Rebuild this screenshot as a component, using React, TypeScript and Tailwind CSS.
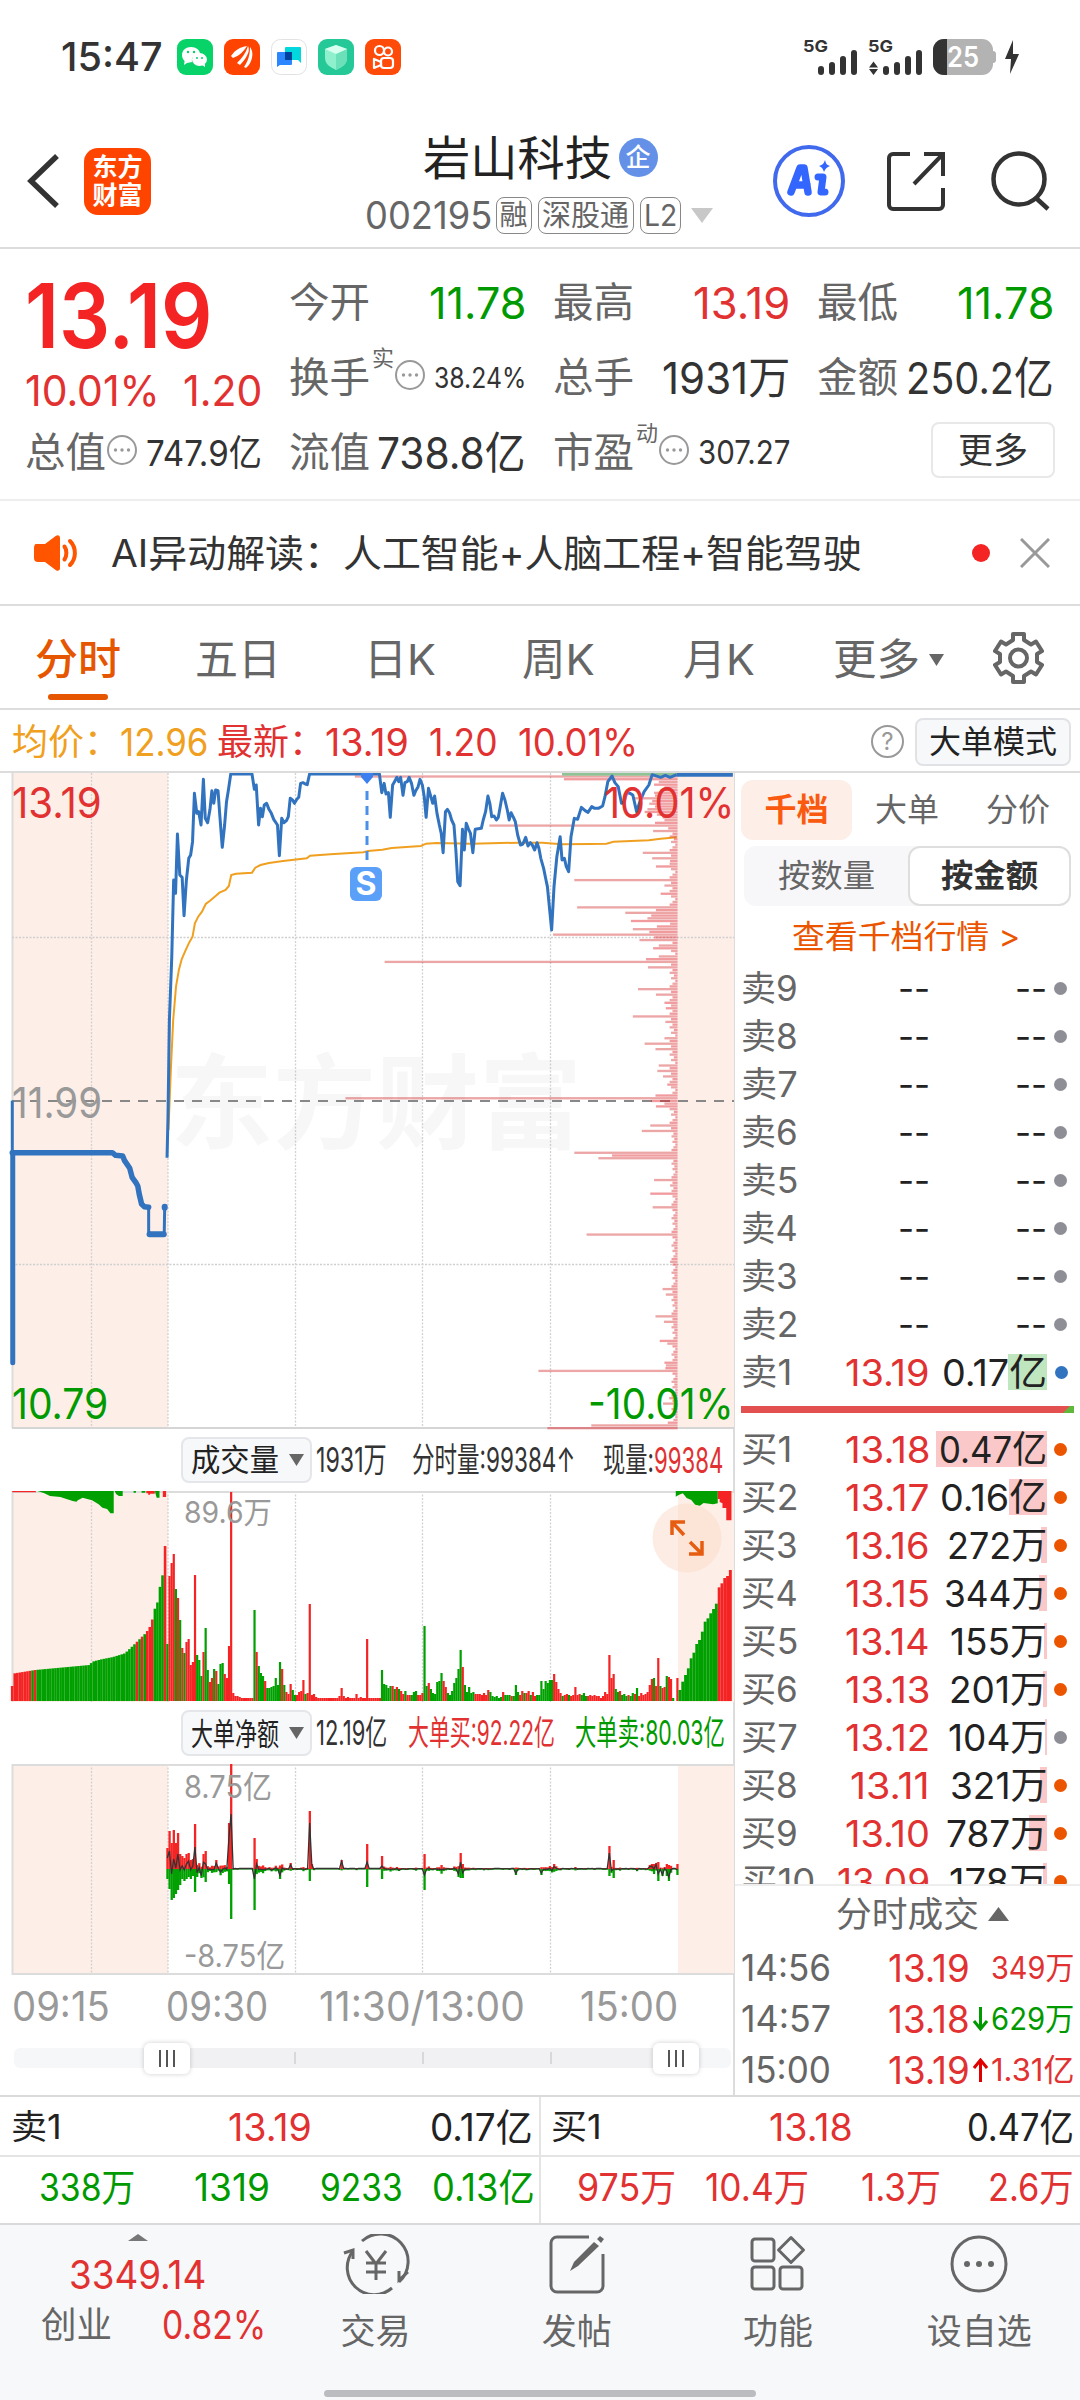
import { useLayoutEffect, useRef, useState } from "react";
import type { ReactNode } from "react";

const AUCTION_LINE =
  "26,1148 190,1148 238,1148 245,1156 260,1158 264,1172 275,1195 280,1222 288,1238 292,1248 295,1272 300,1302 306,1310 315,1312";
const AUCTION_TAIL = "315,1312 315,1385 320,1393 348,1393 349,1312";

const PRICE_LINE =
  "354,1163 356,1040 359,750 364,560 368,330 372,370 376,192 381,315 386,322 390,437 395,330 400,265 404,255 408,215 412,70 417,130 421,125 426,165 431,28 435,145 440,158 445,118 449,62 453,100 457,60 462,62 466,140 471,232 476,165 480,95 484,60 489,12 534,12 539,58 543,45 548,165 552,115 556,140 560,105 565,100 570,118 575,130 580,148 588,165 592,257 597,145 602,158 607,152 611,140 615,85 620,90 624,100 629,88 633,82 637,40 642,38 647,42 651,44 656,12 804,12 809,68 814,40 818,72 823,68 827,142 832,45 836,35 841,22 845,35 849,22 854,76 858,38 863,35 867,22 872,40 877,76 881,62 886,50 890,28 895,45 899,80 903,142 908,55 913,80 917,100 921,78 926,130 931,165 935,190 939,248 944,125 948,118 953,130 957,150 962,165 966,240 970,335 975,347 980,178 984,240 988,160 993,178 997,190 1002,248 1007,178 1020,175 1024,150 1029,125 1034,78 1038,100 1042,140 1047,138 1052,150 1056,142 1060,110 1065,70 1070,90 1075,120 1079,150 1083,128 1088,142 1092,155 1097,195 1103,225 1108,222 1114,202 1119,228 1124,218 1128,225 1133,240 1138,218 1142,235 1146,265 1152,295 1157,330 1160,350 1169,480 1174,350 1180,260 1187,200 1191,270 1196,265 1200,290 1205,305 1210,200 1217,145 1224,148 1232,112 1240,122 1246,127 1254,110 1260,115 1268,115 1277,108 1282,80 1288,35 1297,18 1303,38 1310,50 1317,100 1323,95 1328,68 1335,70 1341,75 1349,125 1356,95 1365,65 1375,45 1382,14 1400,22 1410,16 1420,22 1434,14";

const AVG_LINE =
  "357,1080 362,900 367,750 373,650 379,600 385,568 392,545 400,520 408,500 413,460 420,440 428,425 436,402 445,392 455,380 465,368 478,360 485,348 490,315 500,311 534,308 541,293 552,285 570,279 600,273 650,265 657,257 700,253 770,247 780,243 810,239 830,234 892,228 903,221 925,219 1000,221 1100,218 1150,218 1190,223 1250,222 1285,221 1300,215 1375,211 1400,206 1434,202";

// price level -> left edge of the traded amount bar
const PROFILE: Record<number, number> = {
  0: 752, 1: 1195, 2: 1396, 3: 1386, 4: 1408, 5: 1400, 6: 1386, 7: 1388, 8: 1340, 9: 1382, 10: 1376, 11: 1388, 12: 1372, 13: 1366,
  14: 1392, 15: 1404, 16: 1408, 17: 1388, 18: 1037, 19: 1416, 20: 1384, 28: 1362, 30: 1382, 31: 1420, 33: 1390, 38: 1217,
  40: 1408, 43: 1400, 48: 1223, 49: 1390, 50: 1325, 51: 1380, 52: 1372, 53: 1337, 54: 1420, 55: 1392, 56: 1341, 57: 1376,
  58: 1172, 59: 1386, 60: 1355, 62: 1396, 63: 1384, 66: 1396, 67: 1369, 68: 815, 70: 1373, 78: 1352, 80: 1390, 83: 1408,
  85: 1411, 88: 1341, 90: 1410, 96: 1408, 98: 1366, 100: 1389, 106: 1396, 108: 1393, 110: 1405, 113: 1414, 117: 1389,
  118: 732, 119: 1380, 120: 1408, 121: 1390, 128: 1378, 130: 1360, 138: 1217, 139: 1297, 140: 1268, 148: 1386, 150: 1420,
  153: 1378, 158: 1383, 168: 1243, 178: 1420, 188: 1404, 190: 1411, 198: 1389, 200: 1407, 207: 1398, 208: 1414, 215: 1408,
  216: 1411, 217: 1410, 218: 1141, 228: 1418, 230: 1405, 237: 1415, 238: 1253, 239: 1160,
};

// one entry per minute, colour + height
const VOLUME =
  "g57 r125 r138 r147 g112 r103 g81 r53 g48 r59 r62 r36 r39 r126 g46 g41 g25 r49 g73 g31 r19 r23 g32 r30 g17 g37 g38 r27 r23 r55 r209 r8 r5 r5 r4 r3 r3 r3 r3 r3 r3 g91 r49 g35 g28 g25 r20 g13 g13 g14 g15 g23 g16 g39 r32 g16 r9 r7 r17 g11 g6 r6 r9 r10 r21 g7 r8 r97 r6 r7 r4 r3 r3 r3 r3 r3 r3 r3 r3 r3 r3 r5 r13 r5 r3 r4 r3 r3 r3 r7 r3 r4 r3 r3 r62 r3 r3 r3 r3 r3 r3 g31 g17 g16 g13 g15 r15 g12 r14 g12 r10 r7 g10 r6 r6 g6 g9 g10 r6 r6 r8 g75 g15 r18 g12 g8 g7 g19 g20 g28 r20 r14 g8 g6 g10 g18 g23 g32 g51 r34 g16 g9 g14 g8 g9 r7 r7 r7 r6 r8 r6 r11 g9 g5 g4 g5 g3 g4 r9 g6 g6 g6 r5 g5 g16 g9 r6 r10 g8 r8 r10 g6 r9 r5 g6 g6 g20 g12 g20 g18 g21 g21 r27 r19 r12 r8 g5 r6 r7 g6 r5 r6 r14 r6 r7 g6 g8 g5 r5 r6 r5 r6 r5 r5 r3 r5 r9 r7 r46 r23 r27 g12 g9 r10 g6 g7 g5 r6 g5 g8 r7 g13 r5 r8 r6 r7 r9 r16 r22 g23 r15 r43 g15 r13 r14 g25 r24 r22 g3 g0 r23";

const PRE_TOPS: [number, number][] = [
  [26, 768], [31, 730], [75, 720], [190, 705], [196, 695], [215, 688], [240, 681], [265, 670], [280, 650], [290, 636],
  [310, 608], [318, 590], [325, 560], [330, 525], [335, 515], [340, 462], [346, 428], [350, 348],
];
const POST_TOPS = [780, 755, 735, 715, 685, 668, 642, 630, 605, 575, 565, 550, 537, 521, 472, 460, 444, 438, 420];

const BIG_BUY: Record<number, number> = {
  0: 21, 1: 38, 2: 26, 3: 39, 4: 26, 5: 36, 6: 15, 7: 13, 8: 11, 9: 15, 10: 16, 11: 9, 12: 10, 13: 45, 17: 15, 18: 18, 23: 9,
  29: 46, 30: 105, 41: 31, 42: 10, 58: 6, 67: 58, 68: 5, 82: 9, 94: 25, 101: 13, 121: 15, 138: 16, 139: 5, 182: 5, 208: 23,
  210: 9, 227: 4, 228: 5, 229: 5, 230: 6, 231: 7, 235: 5, 236: 4, 240: 5,
};
const BIG_SELL: Record<number, number> = {
  0: 10, 1: 20, 2: 31, 3: 29, 4: 25, 5: 21, 6: 16, 7: 10, 8: 12, 9: 10, 10: 8, 11: 10, 12: 7, 13: 23, 14: 8, 16: 9, 18: 13, 29: 15,
  30: 50, 41: 41, 53: 10, 67: 12, 94: 18, 101: 10, 121: 21, 137: 8, 138: 9, 139: 9, 164: 6, 176: 6, 208: 7, 210: 9, 229: 5, 231: 12, 233: 7,
  235: 7, 236: 12, 240: 6,
};

const RED = "#f42424";
const GREEN = "#00a000";

const minutes = VOLUME.split(" ").map((v, i) => ({
  x: 166.3 + i * 2.125,
  color: v[0] === "r" ? RED : GREEN,
  h: Number(v.slice(1)),
}));

const netBars = minutes.map((m, i) => {
  const small = Math.min(8, m.h * 0.13);
  const buy = BIG_BUY[i] ?? Math.max(1, small * (i % 3 === 0 ? 1.1 : 0.7));
  const sell = BIG_SELL[i] ?? Math.max(0.5, small * (i % 4 === 1 ? 1.3 : 0.8));
  return { x: m.x, buy, sell };
});

function lerpTop(x: number) {
  for (let i = 1; i < PRE_TOPS.length; i++) {
    const [x1, y1] = PRE_TOPS[i];
    const [x0, y0] = PRE_TOPS[i - 1];
    if (x <= x1) return y0 + ((y1 - y0) * (x - x0)) / (x1 - x0);
  }
  return 348;
}

function preColor(x: number) {
  if (x > 346) return RED;
  if (x > 327) return GREEN;
  if (x > 312) return RED;
  if (x > 284) return Math.round(x / 5.5) % 2 ? RED : GREEN;
  if (x > 75) return GREEN;
  return x > 64 && x < 70 ? GREEN : RED;
}

const preBars = Array.from({ length: 61 }, (_, i) => 26 + i * 5.4);

// stretches or squeezes a line of text to the width of its box
function Fit({ className = "", children }: { className?: string; children: ReactNode }) {
  const box = useRef<HTMLSpanElement>(null);
  const text = useRef<HTMLSpanElement>(null);
  const [scale, setScale] = useState(1);
  useLayoutEffect(() => {
    if (box.current && text.current) {
      setScale(box.current.clientWidth / text.current.offsetWidth);
    }
  }, []);
  return (
    <span ref={box} className={"block shrink-0 leading-none whitespace-nowrap " + className}>
      <span ref={text} className="inline-block origin-left" style={{ transform: `scaleX(${scale})` }}>
        {children}
      </span>
    </span>
  );
}

function StatusBar() {
  return (
    <div className="flex h-[113px] items-center pl-[61px]">
      <Fit className="w-[102px] text-[40px] font-medium text-[#333]">15:47</Fit>
      <div className="ml-[14px] flex gap-[11px]">
        <svg className="size-9" viewBox="0 0 36 36">
          <rect width="36" height="36" rx="9" fill="#07d368" />
          <path d="M14 8c5 0 9 3 9 7-5 0-9 3-8 8l-5 1-3 2 .6-4C5.600 20 5 18 5 16c0-5 4-8 9-8z" fill="#fff" />
          <ellipse cx="22.500" cy="20.500" rx="7.500" ry="6.500" fill="#fff" />
          <path d="M25 26l3 2v-4z" fill="#fff" />
          <g fill="#07d368">
            <circle cx="11" cy="13" r="1.200" />
            <circle cx="17" cy="13" r="1.200" />
            <circle cx="20" cy="19" r="1" />
            <circle cx="25" cy="19" r="1" />
          </g>
        </svg>
        <svg className="size-9" viewBox="0 0 36 36">
          <rect width="36" height="36" rx="9" fill="#fe4400" />
          <path d="M7 17C11 11 16 8 23 7c-3 5-8 10-14 12z" fill="#fff" />
          <path d="M13 24c5-5 9-10 11-17 1 2 1 4 .5 6-1.500 5-5 9-8.500 13z" fill="#fff" />
          <path d="M20 28c4-6 6-12 6-20 3 4 3 9 1 14-1 3-3 5-5 7z" fill="#fff" />
        </svg>
        <svg className="size-9" viewBox="0 0 36 36">
          <rect x=".500" y=".500" width="35" height="35" rx="9" fill="#fff" stroke="#e2e2e2" />
          <path d="M15 8h14a1 1 0 011 1v15l-3-3H15a1 1 0 01-1-1V9a1 1 0 011-1z" fill="#00d8de" />
          <path d="M7 13h13a1 1 0 011 1v11a1 1 0 01-1 1H9l-3 2V14a1 1 0 011-1z" fill="#2b86ff" />
          <path d="M14 13h7v8h-7z" fill="#00419c" />
        </svg>
        <svg className="size-9" viewBox="0 0 36 36">
          <rect width="36" height="36" rx="9" fill="#25c997" />
          <path d="M18 6l11 4v9c0 6-5 9-11 12C12 28 7 25 7 19v-9z" fill="#8ff0cd" />
          <path d="M18 14l11-4v9c0 6-5 9-11 12z" fill="#6ce0b8" />
          <path d="M18 6l11 4-11 5L7 10z" fill="#d6fff0" />
        </svg>
        <svg className="size-9" viewBox="0 0 36 36">
          <rect width="36" height="36" rx="9" fill="#ff4b0a" />
          <g fill="none" stroke="#fff" strokeWidth="2.200">
            <circle cx="14.500" cy="11.500" r="4.500" />
            <circle cx="23" cy="12.500" r="4" />
            <rect x="16" y="19" width="12" height="10" rx="3" />
            <path d="M16 23l-7-3v9l7-3z" strokeLinejoin="round" />
          </g>
        </svg>
      </div>
      <div className="ml-[402px] flex items-center gap-[10px] text-[#333]">
        <svg className="h-9 w-[120px]" viewBox="0 0 120 36" fontFamily="Inter" fontWeight="700">
          <text x="0" y="13" fontSize="16" textLength="25" lengthAdjust="spacingAndGlyphs" fill="#333">5G</text>
          <text x="65" y="13" fontSize="16" textLength="25" lengthAdjust="spacingAndGlyphs" fill="#333">5G</text>
          <g stroke="#333" strokeWidth="6" strokeLinecap="round">
            <path d="M18 30v3M29 26v7M40 20v13M51 14v19M83 30v3M94 26v7M105 20v13M116 14v19" />
          </g>
          <path d="M70.500 22.500l4.500 6h-9zM70.500 36l4.500-6h-9z" fill="#333" />
        </svg>
        <div className="flex items-center">
          <div className="flex h-9 w-[60px] items-center overflow-hidden rounded-[11px] bg-[#b3b3b3]">
            <div className="h-full w-[14px] bg-[#333]" />
            <Fit className="w-[32px] text-[28px] font-semibold text-white">25</Fit>
          </div>
          <div className="h-3 w-[3px] rounded-r bg-[#b3b3b3]" />
          <svg className="ml-[9px] h-[34px] w-[14px]" viewBox="0 0 14 34">
            <path d="M8 0L0 19h6L5 34l9-20H8z" fill="#333" />
          </svg>
        </div>
      </div>
    </div>
  );
}

function Header() {
  return (
    <div className="flex h-[136px] items-center border-b-2 border-[#dcdcdc]">
      <div className="flex w-[330px] items-center pt-[2px] pl-[27px]">
        <svg className="h-[54px] w-8" viewBox="0 0 32 54" fill="none" stroke="#333" strokeWidth="5.500">
          <path d="M30 2L4 27l26 25" />
        </svg>
        <div className="ml-[25px] flex size-[67px] flex-col items-center justify-center gap-[3px] rounded-[14px] bg-[#ff4400] text-[25px] leading-none font-bold text-white">
          <span>东方</span>
          <span>财富</span>
        </div>
      </div>
      <div className="flex h-full w-[420px] flex-col items-center pt-[21px]">
        <div className="flex items-center gap-[7px]">
          <Fit className="w-[189px] text-[47px] text-[#222]">岩山科技</Fit>
          <span className="flex size-[39px] items-center justify-center rounded-full bg-[#6490e8] text-[25px] leading-none font-medium text-white">企</span>
        </div>
        <div className="mt-[15px] -ml-[3px] flex items-center text-[#666]">
          <Fit className="w-[127px] text-[38px]">002195</Fit>
          <span className="ml-[4px] flex h-[37px] w-9 items-center justify-center rounded-lg border-[1.500px] border-[#888] text-[28px] leading-none">融</span>
          <span className="ml-[6px] flex h-[37px] w-24 items-center justify-center rounded-lg border-[1.500px] border-[#888] text-[29px] leading-none">深股通</span>
          <span className="ml-[6px] flex h-[37px] w-[41px] items-center justify-center rounded-lg border-[1.500px] border-[#888]">
            <Fit className="w-[33px] text-[30px]">L2</Fit>
          </span>
          <svg className="ml-[10px] h-[15px] w-[22px]" viewBox="0 0 22 15">
            <path d="M0 0h22L11 15z" fill="#c8c8c8" />
          </svg>
        </div>
      </div>
      <div className="flex items-center pt-[2px] pl-[23px]">
        <svg className="size-[72px]" viewBox="0 0 72 72">
          <circle cx="36" cy="36" r="34" fill="none" stroke="#4169ee" strokeWidth="4" />
          <path d="M18 47L27 23h4l4 24M22 40h12" fill="none" stroke="#3366ff" strokeWidth="7.500" strokeLinecap="round" strokeLinejoin="round" />
          <path d="M45 32h5l-2 15h4" fill="none" stroke="#3366ff" strokeWidth="7" strokeLinecap="round" strokeLinejoin="round" />
          <path d="M52 15c1 4 2 5 5 6-3 1-5 3-6 6-1-3-2-5-5-6 4-1 5-3 6-6z" fill="#3366ff" />
        </svg>
        <svg className="ml-[42px] h-[60px] w-[58px]" viewBox="0 0 58 60" fill="none" stroke="#333" strokeWidth="4">
          <path d="M23 3H6a4 4 0 00-4 4v47a4 4 0 004 4h46a4 4 0 004-4V37" />
          <path d="M37 3h19v22M56 3L27 33" />
        </svg>
        <svg className="ml-[46px] size-[60px]" viewBox="0 0 60 60" fill="none" stroke="#333" strokeWidth="4.500">
          <circle cx="28" cy="28" r="25.500" />
          <path d="M45 47l12 11" />
        </svg>
      </div>
    </div>
  );
}

function Dots() {
  return (
    <svg className="-mt-[6px] size-8 shrink-0" viewBox="0 0 32 32">
      <circle cx="16" cy="16" r="14" fill="none" stroke="#999" strokeWidth="2" />
      <g fill="#999">
        <circle cx="9.500" cy="16" r="1.700" />
        <circle cx="16" cy="16" r="1.700" />
        <circle cx="22.500" cy="16" r="1.700" />
      </g>
    </svg>
  );
}

function Cell({ label, children }: { label: string; children: ReactNode }) {
  return (
    <div className="flex h-[75px] w-[237px] items-center">
      <Fit className="w-[81px] text-[41px] text-[#666]">{label}</Fit>
      {children}
    </div>
  );
}

function Quote() {
  return (
    <div className="flex h-[252px] gap-[27px] border-b-2 border-[#eee] pt-[16px] pl-[25px] text-[44px] text-[#333]">
      <div className="w-[237px]">
        <div className="flex h-[100px] items-center">
          <Fit className="w-[187px] text-[89px] font-semibold text-[#f42424]">13.19</Fit>
        </div>
        <div className="flex h-[50px] items-center justify-between text-[#e13131]">
          <Fit className="w-[135px] text-[43px]">10.01%</Fit>
          <Fit className="w-[79px] text-[43px]">1.20</Fit>
        </div>
        <Cell label="总值">
          <Dots />
          <Fit className="ml-auto w-[116px] text-[36px]">747.9亿</Fit>
        </Cell>
      </div>
      <div>
        <Cell label="今开">
          <Fit className="ml-auto w-[97px] text-[#009a00]">11.78</Fit>
        </Cell>
        <Cell label="换手">
          <span className="-mt-10 ml-[2px] text-[22px] leading-none text-[#666]">实</span>
          <Dots />
          <Fit className="ml-auto w-[92px] text-[28px]">38.24%</Fit>
        </Cell>
        <Cell label="流值">
          <Fit className="ml-auto w-[149px]">738.8亿</Fit>
        </Cell>
      </div>
      <div>
        <Cell label="最高">
          <Fit className="ml-auto w-[97px] text-[#e13131]">13.19</Fit>
        </Cell>
        <Cell label="总手">
          <Fit className="ml-auto w-[128px]">1931万</Fit>
        </Cell>
        <Cell label="市盈">
          <span className="-mt-10 ml-[2px] text-[22px] leading-none text-[#666]">动</span>
          <Dots />
          <Fit className="ml-auto w-[92px] text-[33px]">307.27</Fit>
        </Cell>
      </div>
      <div>
        <Cell label="最低">
          <Fit className="ml-auto w-[97px] text-[#009a00]">11.78</Fit>
        </Cell>
        <Cell label="金额">
          <Fit className="ml-auto w-[148px]">250.2亿</Fit>
        </Cell>
        <div className="flex h-[70px] w-[238px] items-center justify-end">
          <span className="flex h-[56px] w-[124px] items-center justify-center rounded-lg border-2 border-[#e8e8e8] text-[35px] leading-none">更多</span>
        </div>
      </div>
    </div>
  );
}

function News() {
  return (
    <div className="flex h-[105px] items-center border-b-2 border-[#ddd] pl-[34px]">
      <svg className="h-9 w-11" viewBox="0 0 44 36">
        <path d="M2 9h9L22 .800c2-1.200 4-.300 4 2v30.400c0 2.300-2 3.200-4 2L11 27H4a4 4 0 01-4-4V13c0-2 .800-4 2-4z" fill="#ff5500" />
        <path d="M30.500 11.500c2.500 3.500 2.500 9.500 0 13M36 6c6.500 6.500 6.500 17.500 0 24" fill="none" stroke="#ff5500" strokeWidth="4" strokeLinecap="round" />
      </svg>
      <Fit className="ml-[33px] w-[751px] text-[38px] text-[#333]">AI异动解读：人工智能+人脑工程+智能驾驶</Fit>
      <span className="ml-[110px] size-[18px] rounded-full bg-[#f42424]" />
      <svg className="ml-[30px] size-[30px]" viewBox="0 0 30 30" stroke="#999" strokeWidth="3">
        <path d="M1 1l28 28M29 1L1 29" />
      </svg>
    </div>
  );
}

function Tabs() {
  return (
    <div className="flex h-[104px] items-center border-b-2 border-[#ddd] pt-[5px] pl-[35px] text-[43px] text-[#666]">
      <div className="relative">
        <Fit className="w-[86px] font-medium text-[#e65500]">分时</Fit>
        <span className="absolute top-[56px] left-[13px] h-[6px] w-[60px] rounded-full bg-[#e65500]" />
      </div>
      <Fit className="ml-[74px] w-[86px]">五日</Fit>
      <Fit className="ml-[83px] w-[72px]">日K</Fit>
      <Fit className="ml-[86px] w-[73px]">周K</Fit>
      <Fit className="ml-[88px] w-[72px]">月K</Fit>
      <Fit className="ml-[78px] w-[87px]">更多</Fit>
      <svg className="ml-[9px] h-3 w-[15px]" viewBox="0 0 15 12">
        <path d="M0 0h15L7.500 12z" fill="#666" />
      </svg>
      <svg className="-mt-[3px] ml-[49px] h-[52px] w-[51px]" viewBox="0 0 51 52" fill="none" stroke="#666" strokeWidth="4">
        <path d="M20 2h11v6l7 4.500 5-3L49 19l-5 3v8l5 3-6 9.500-5-3-7 4.500v6H20v-6l-7-4.500-5 3L2 33l5-3v-8l-5-3 6-9.500 5 3L20 8z" strokeLinejoin="round" />
        <circle cx="25.500" cy="26" r="8.500" />
      </svg>
    </div>
  );
}

function InfoLine() {
  return (
    <div className="flex h-[63px] items-center border-b-2 border-[#dcdcdc] pt-[2px] pl-[12px] text-[38px] text-[#e13131]">
      <Fit className="w-[108px] text-[36px] text-[#f0a020]">均价：</Fit>
      <Fit className="w-[88px] text-[#f0a020]">12.96</Fit>
      <Fit className="ml-[9px] w-[108px] text-[36px]">最新：</Fit>
      <Fit className="w-[84px]">13.19</Fit>
      <Fit className="ml-[20px] w-[69px]">1.20</Fit>
      <Fit className="ml-[20px] w-[120px]">10.01%</Fit>
      <span className="ml-[233px] flex size-[33px] items-center justify-center rounded-full border-2 border-[#999] text-[24px] leading-none text-[#999]">?</span>
      <span className="ml-[11px] flex h-[48px] w-[156px] items-center justify-center rounded-lg border-2 border-[#e0e2e6] bg-[#f7f8fa] text-[32px] leading-none text-[#222]">
        大单模式
      </span>
    </div>
  );
}

function Grid({ h }: { h: number }) {
  return (
    <g>
      <rect x="12" y="0" width="156" height={h} fill="#fdeee7" />
      <rect x="678" y="0" width="56" height={h} fill="#fdeee7" />
      <path d={`M91.500 0V${h}M168 0V${h}M295.500 0V${h}M422.500 0V${h}M550.500 0V${h}`} stroke="#d2d2d2" strokeWidth="1.300" strokeDasharray="2 1.500" />
      <path d={`M12.500 0V${h}`} stroke="#dcdcdc" strokeWidth="2" />
    </g>
  );
}

function PriceChart() {
  const levels = Array.from({ length: 240 }, (_, i) => i);
  return (
    <div className="relative h-[657px] text-[42px]">
      <svg className="block h-[657px] w-[734px]" viewBox="0 0 734 657">
        <Grid h={655} />
        <path d="M12 164.500H734M12 491.500H734" stroke="#cfcfcf" strokeWidth="1.300" strokeDasharray="2 1.500" />
        <text x="170" y="368" fontSize="103" fontWeight="700" fill="#b0b0b0" fillOpacity=".100" textLength="412" fontFamily="Noto Sans CJK SC, sans-serif">
          东方财富
        </text>
        <path d="M12 655H734" stroke="#d5d5d5" strokeWidth="2" />
        <path d="M12 328H734" stroke="#888" strokeWidth="2" strokeDasharray="10 8" />
        {/* chart grid is 2.119 x 3 units per pixel */}
        <g transform="translate(0 -3) scale(0.4719 0.33333)">
          <polyline points={AVG_LINE} fill="none" stroke="#f0a020" strokeWidth="2" vectorEffect="non-scaling-stroke" />
          {levels.map((i) => {
            const left = PROFILE[i] ?? 1436 - 5 - ((i * 7) % 5) * (i < 130 ? 3 : 2);
            return (
              <rect key={i} x={left} y={16 + i * 8.18} width={1436 - left} height="7" fill={i % 2 ? "#e0222a" : "#d83a3a"} fillOpacity=".450" />
            );
          })}
          <rect x="1191" y="9" width="245" height="8" fill="#8ec495" />
          <g fill="none" stroke="#3273bf" strokeLinejoin="round">
            <polyline points={PRICE_LINE} strokeWidth="3" vectorEffect="non-scaling-stroke" />
            <polyline points="26,992 26,1148" strokeWidth="3" vectorEffect="non-scaling-stroke" />
            <polyline points="27,1148 27,1778" strokeWidth="5" strokeLinecap="round" vectorEffect="non-scaling-stroke" />
            <polyline points={AUCTION_LINE} strokeWidth="5.500" strokeLinecap="round" vectorEffect="non-scaling-stroke" />
            <polyline points={AUCTION_TAIL} strokeWidth="3" vectorEffect="non-scaling-stroke" />
            <polyline points="317,1393 347,1393" strokeWidth="6" strokeLinecap="round" vectorEffect="non-scaling-stroke" />
            <polyline points="349,1310 349,1313" strokeWidth="6" strokeLinecap="round" vectorEffect="non-scaling-stroke" />
            <polyline points="1434,14 1553,14" strokeWidth="4" vectorEffect="non-scaling-stroke" />
          </g>
        </g>
        <path d="M361 0h12v4l-6 7-6-7z" fill="#3b7ff0" />
        <path d="M367 18V92" stroke="#4a90e8" strokeWidth="3" strokeDasharray="9 6" />
        <rect x="350" y="94" width="32" height="34" rx="6" fill="#5ba0f8" />
      </svg>
      <div className="absolute top-[94px] left-[350px] flex h-[34px] w-8 items-center justify-center text-[32px] leading-none font-bold text-white">S</div>
      <div className="absolute top-[9px] left-[12px] text-[#e13131]"><Fit className="w-[90px]">13.19</Fit></div>
      <div className="absolute top-[9px] left-[604px] text-[#e13131]"><Fit className="w-[130px]">10.01%</Fit></div>
      <div className="absolute top-[309px] left-[12px] text-[#999]"><Fit className="w-[90px]">11.99</Fit></div>
      <div className="absolute top-[610px] left-[12px] text-[#009a00]"><Fit className="w-[96px]">10.79</Fit></div>
      <div className="absolute top-[610px] left-[588px] text-[#009a00]"><Fit className="w-[146px]">-10.01%</Fit></div>
    </div>
  );
}

function Picker({ children }: { children: ReactNode }) {
  return (
    <div className="flex h-[46px] w-[131px] items-center rounded-lg border-2 border-[#e4e6ea] bg-[#f7f8fa] pl-[8px] text-[31px] text-[#222]">
      {children}
      <svg className="ml-[10px] h-3 w-[15px]" viewBox="0 0 15 12">
        <path d="M0 0h15L7.500 12z" fill="#666" />
      </svg>
    </div>
  );
}

function VolumeChart() {
  return (
    <div>
      <div className="flex h-[61px] items-center pb-[2px] pl-[181px] text-[34px] text-[#333]">
        <Picker><Fit className="w-[88px]">成交量</Fit></Picker>
        <Fit className="ml-[4px] w-[71px]">1931万</Fit>
        <Fit className="ml-[25px] w-[163px]">分时量:99384↑</Fit>
        <Fit className="ml-[28px] w-[51px]">现量:</Fit>
        <Fit className="w-[69px] text-[36px] text-[#e13131]">99384</Fit>
      </div>
      <div className="relative h-[211px]">
        <svg className="block h-[211px] w-[734px]" viewBox="0 0 734 211">
          <Grid h={211} />
          <path d="M12 1H734" stroke="#dcdcdc" strokeWidth="2" />
          {preBars.map((x) => (
            <rect key={x} x={x / 2.119 - 1.4} y={(lerpTop(x) - 183) / 3} width="2.600" height={(813 - lerpTop(x)) / 3} fill={preColor(x)} />
          ))}
          {minutes.map((m) => (
            <rect key={m.x} x={m.x} y={210 - m.h} width="2.200" height={m.h} fill={m.color} />
          ))}
          {POST_TOPS.map((top, i) => (
            <rect key={i} x={678.5 + i * 2.8} y={(top - 183) / 3} width="2.900" height={(813 - top) / 3} fill={i > 13 ? RED : GREEN} />
          ))}
          <g transform="translate(0 -61) scale(0.4719 0.33333)" fill={GREEN}>
            <path d="M26 183h50v4H26zM310 183h18v8h-10v3h-4v-4h-4zM345 183h7v18h-7z" fill={RED} />
            <path d="M80 183h161v67h-7l-7-13-10-4-8-10-14-12-20-8-10 8-3 4-8-2-18-8-8-4-22-3-12-8zM243 183h17v15h-8l-6-6zM328 183h10v20h-6zM283 183h5v5h-5zM300 183h8v5h-8z" />
            <path d="M1432 183h89v37l-10 3-20-4-8 8-10-3-8-14-10-6-8-14-8 4-7 6z" />
            <path d="M1521 183h29v88h-11v-37h-8v-14l-6-4v-9h-4z" fill={RED} />
          </g>
          <circle cx="687" cy="47" r="34.500" fill="#fbd9c8" fillOpacity=".500" />
          <path d="M672 44V31h13M672 31l12 13M702 50v13h-13M702 63L690 51" fill="none" stroke="#e65c10" strokeWidth="3.500" />
        </svg>
        <div className="absolute top-[6px] left-[184px] text-[30px] text-[#999]"><Fit className="w-[88px]">89.6万</Fit></div>
      </div>
    </div>
  );
}

function NetChart() {
  const line = netBars.map((b) => `${b.x + 1},${105 - b.buy + b.sell}`).join(" ");
  return (
    <div>
      <div className="flex h-[62px] items-center pl-[181px] text-[34px] text-[#333]">
        <Picker><Fit className="w-[88px]">大单净额</Fit></Picker>
        <Fit className="ml-[4px] w-[71px]">12.19亿</Fit>
        <Fit className="ml-[21px] w-[147px] text-[#e13131]">大单买:92.22亿</Fit>
        <Fit className="ml-[20px] w-[150px] text-[#009a00]">大单卖:80.03亿</Fit>
      </div>
      <div className="relative h-[211px]">
        <svg className="block h-[211px] w-[734px]" viewBox="0 0 734 211">
          <Grid h={211} />
          <path d="M12 1H734M12 210H734" stroke="#dcdcdc" strokeWidth="2" />
          {netBars.map((b) => (
            <g key={b.x}>
              <rect x={b.x} y={105 - b.buy} width="2.300" height={b.buy} fill={RED} />
              <rect x={b.x} y="105" width="2.300" height={b.sell} fill={GREEN} />
            </g>
          ))}
          <polyline points={line} fill="none" stroke="#333" strokeWidth="1.300" />
        </svg>
        <div className="absolute top-[7px] left-[184px] text-[31px] text-[#999]"><Fit className="w-[88px]">8.75亿</Fit></div>
        <div className="absolute top-[176px] left-[184px] text-[31px] text-[#999]"><Fit className="w-[101px]">-8.75亿</Fit></div>
      </div>
    </div>
  );
}

function Handle() {
  return (
    <div className="flex h-[31px] w-[46px] items-center justify-center gap-[5px] rounded-md bg-white shadow-[0_0_5px_rgba(0,0,0,0.200)]">
      <span className="h-[17px] w-[2px] bg-[#555]" />
      <span className="h-[17px] w-[2px] bg-[#555]" />
      <span className="h-[17px] w-[2px] bg-[#555]" />
    </div>
  );
}

function TimeAxis() {
  return (
    <div className="text-[41px] text-[#999]">
      <div className="flex h-[63px] items-center pl-[12px]">
        <Fit className="w-[98px]">09:15</Fit>
        <Fit className="ml-[56px] w-[102px]">09:30</Fit>
        <Fit className="ml-[51px] w-[206px]">11:30/13:00</Fit>
        <Fit className="ml-[55px] w-[98px]">15:00</Fit>
      </div>
      <div className="relative flex h-[40px] items-center pl-[14px]">
        <div className="flex h-5 w-[717px] rounded-md bg-[#f6f7f9] pl-[153px]">
          <div className="flex h-full w-[509px] items-center bg-[#f1f1f3]">
            <span className="ml-[127px] h-3 w-[2px] bg-[#d8d8da]" />
            <span className="ml-[126px] h-3 w-[2px] bg-[#d8d8da]" />
            <span className="ml-[126px] h-3 w-[2px] bg-[#d8d8da]" />
          </div>
        </div>
        <div className="absolute top-[5px] left-[144px]"><Handle /></div>
        <div className="absolute top-[5px] left-[653px]"><Handle /></div>
      </div>
    </div>
  );
}

const bids = [
  { n: 1, price: "13.18", vol: "0.47亿", dot: "bg-[#eb5500]", bar: "w-[111px]", vw: "w-[108px]" },
  { n: 2, price: "13.17", vol: "0.16亿", dot: "bg-[#eb5500]", bar: "w-[38px]", vw: "w-[107px]" },
  { n: 3, price: "13.16", vol: "272万", dot: "bg-[#eb5500]", bar: "w-[6px]", vw: "w-[100px]" },
  { n: 4, price: "13.15", vol: "344万", dot: "bg-[#eb5500]", bar: "w-[8px]", vw: "w-[103px]" },
  { n: 5, price: "13.14", vol: "155万", dot: "bg-[#eb5500]", bar: "w-[3px]", vw: "w-[97px]" },
  { n: 6, price: "13.13", vol: "201万", dot: "bg-[#eb5500]", bar: "w-[4px]", vw: "w-[98px]" },
  { n: 7, price: "13.12", vol: "104万", dot: "bg-[#8e8e96]", bar: "w-[2px]", vw: "w-[99px]" },
  { n: 8, price: "13.11", vol: "321万", dot: "bg-[#eb5500]", bar: "w-[7px]", vw: "w-[97px]" },
  { n: 9, price: "13.10", vol: "787万", dot: "bg-[#eb5500]", bar: "w-[18px]", vw: "w-[101px]" },
  { n: 10, price: "13.09", vol: "178万", dot: "bg-[#eb5500]", bar: "w-[4px]", vw: "w-[98px]" },
];

function OrderBook() {
  return (
    <div className="w-[345px]">
      <div className="flex h-[67px] items-center pt-[7px] pl-[6px] text-[32px] text-[#666]">
        <div className="flex h-[60px] w-[111px] items-center justify-center rounded-xl bg-[#fdeee7] font-bold text-[#fa5a0f]">
          <Fit className="w-[64px]">千档</Fit>
        </div>
        <Fit className="ml-[23px] w-[64px]">大单</Fit>
        <Fit className="ml-[47px] w-[64px]">分价</Fit>
      </div>
      <div className="mt-[6px] ml-[9px] flex h-[60px] w-[327px] rounded-xl bg-[#f7f7fa] text-[32px]">
        <div className="flex flex-1 items-center justify-center text-[#666]"><Fit className="w-[97px]">按数量</Fit></div>
        <div className="flex w-[163px] items-center justify-center rounded-xl border-2 border-[#dedede] bg-white font-bold text-[#333]">
          <Fit className="w-[97px]">按金额</Fit>
        </div>
      </div>
      <div className="flex h-[59px] items-center pt-[3px] pl-[57px] text-[32px] text-[#eb5500]">
        <Fit className="w-[228px]">查看千档行情 &gt;</Fit>
      </div>

      <div className="-mt-px text-[35px] text-[#222]">
        {[9, 8, 7, 6, 5, 4, 3, 2].map((n) => (
          <div key={n} className="flex h-12 items-center pl-[6px]">
            <Fit className="w-[57px] text-[#666]">卖{n}</Fit>
            <Fit className="ml-[100px] w-[32px]">--</Fit>
            <Fit className="ml-[85px] w-[32px]">--</Fit>
            <span className="ml-[7px] size-[13px] rounded-full bg-[#8e8e96]" />
          </div>
        ))}
        <div className="flex h-12 items-center pl-[6px]">
          <Fit className="w-[51px] text-[#666]">卖1</Fit>
          <Fit className="ml-[53px] w-[85px] text-[37px] text-[#e13131]">13.19</Fit>
          <div className="relative ml-[12px] flex h-9 w-[105px] items-center">
            <span className="absolute top-0 right-0 h-9 w-[39px] bg-[#c0e6c0]" />
            <Fit className="relative w-[105px] text-[37px]">0.17亿</Fit>
          </div>
          <span className="ml-[8px] size-[13px] rounded-full bg-[#3273bf]" />
        </div>
      </div>

      <svg className="mt-[10px] ml-[6px] block h-[7px] w-[333px]" viewBox="0 0 333 7">
        <path d="M0 0H333V7H0z" fill="#e25050" />
        <path d="M333 0h-4l-7 7h11z" fill="#5fb83c" />
      </svg>

      <div className="h-[471px] overflow-hidden pt-[12px] text-[35px] text-[#222]">
        {bids.map((b) => (
          <div key={b.n} className="flex h-12 items-center pl-[6px]">
            <div className="w-[77px]"><Fit className={b.n === 1 ? "w-[51px] text-[#666]" : b.n === 10 ? "w-[74px] text-[#666]" : "w-[57px] text-[#666]"}>买{b.n}</Fit></div>
            <Fit className={b.n === 10 ? "ml-[19px] w-[93px] text-[37px] text-[#e13131]" : b.n === 8 ? "ml-[32px] w-[80px] text-[37px] text-[#e13131]" : "ml-[27px] w-[85px] text-[37px] text-[#e13131]"}>{b.price}</Fit>
            <div className="relative ml-auto flex h-9 w-[112px] items-center justify-end">
              <span className={"absolute top-0 right-0 h-9 bg-[#fac8c8] " + b.bar} />
              <Fit className={"relative text-[37px] " + b.vw}>{b.vol}</Fit>
            </div>
            <span className={"mr-[13px] ml-[7px] size-[13px] rounded-full " + b.dot} />
          </div>
        ))}
      </div>

      <div className="border-t-2 border-[#eee] text-[#666]">
        <div className="flex h-[56px] items-center pl-[101px] text-[35px]">
          <Fit className="w-[143px]">分时成交</Fit>
          <svg className="ml-[9px] h-[14px] w-[21px]" viewBox="0 0 21 14">
            <path d="M10.500 0L21 14H0z" fill="#666" />
          </svg>
        </div>
        <Trade time="14:56" price="13.19" amount="349万" color="text-[#e13131]" />
        <Trade time="14:57" price="13.18" amount="629万" color="text-[#009a00]" arrow="down" />
        <Trade time="15:00" price="13.19" amount="1.31亿" color="text-[#e13131]" arrow="up" />
      </div>
    </div>
  );
}

type TradeProps = { time: string; price: string; amount: string; color: string; arrow?: "up" | "down" };

function Trade({ time, price, amount, color, arrow }: TradeProps) {
  return (
    <div className="flex h-[51px] items-center pl-[6px] text-[37px]">
      <Fit className="w-[90px]">{time}</Fit>
      <Fit className="ml-[57px] w-[82px] text-[38px] text-[#e13131]">{price}</Fit>
      <span className="flex w-[21px] justify-center">
        {arrow === "down" && (
          <svg className="h-[24px] w-[15px]" viewBox="0 0 15 24" fill="none" stroke="#009a00" strokeWidth="3">
            <path d="M7.500 0v22M1 14l6.500 8 6.500-8" />
          </svg>
        )}
        {arrow === "up" && (
          <svg className="h-[24px] w-[15px]" viewBox="0 0 15 24" fill="none" stroke="#e00000" strokeWidth="3">
            <path d="M7.500 24V2M1 10l6.500-8 6.500 8" />
          </svg>
        )}
      </span>
      <Fit className={"w-[83px] text-[31px] " + color}>{amount}</Fit>
    </div>
  );
}

function Level2() {
  return (
    <div className="flex h-[130px] border-t-2 border-b-2 border-[#d8dadc] text-[38px]">
      <div className="w-[541px] border-r-2 border-[#e4e4e4]">
        <div className="flex h-[60px] items-center border-b-2 border-[#e4e4e4] pt-px pl-[11px] text-[#222]">
          <Fit className="w-[51px] text-[34px]">卖1</Fit>
          <Fit className="ml-[166px] w-[84px] text-[#e13131]">13.19</Fit>
          <Fit className="ml-[118px] w-[103px]">0.17亿</Fit>
        </div>
        <div className="flex h-[60px] items-center pl-[39px] text-[#009a00]">
          <Fit className="w-[96px]">338万</Fit>
          <Fit className="ml-[59px] w-[76px]">1319</Fit>
          <Fit className="ml-[50px] w-[83px]">9233</Fit>
          <Fit className="ml-[29px] w-[103px]">0.13亿</Fit>
        </div>
      </div>
      <div className="flex-1">
        <div className="flex h-[60px] items-center border-b-2 border-[#e4e4e4] pt-px pl-[10px] text-[#222]">
          <Fit className="w-[51px] text-[34px]">买1</Fit>
          <Fit className="ml-[167px] w-[84px] text-[#e13131]">13.18</Fit>
          <Fit className="ml-[114px] w-[107px]">0.47亿</Fit>
        </div>
        <div className="flex h-[60px] items-center pl-[36px] text-[#e13131]">
          <Fit className="w-[99px]">975万</Fit>
          <Fit className="ml-[29px] w-[104px]">10.4万</Fit>
          <Fit className="ml-[52px] w-[80px]">1.3万</Fit>
          <Fit className="ml-[47px] w-[86px]">2.6万</Fit>
        </div>
      </div>
    </div>
  );
}

function NavItem({ icon, label }: { icon: ReactNode; label: string }) {
  return (
    <div className="flex flex-1 flex-col items-center pt-[9px] text-[35px] leading-none text-[#666]">
      <svg className="h-[60px] w-[68px]" viewBox="0 0 68 60" fill="none" stroke="#666" strokeWidth="3">
        {icon}
      </svg>
      <span className="mt-[20px]">{label}</span>
    </div>
  );
}

function BottomNav() {
  return (
    <div className="h-[175px] bg-[#f7f8fa]">
      <div className="flex h-[163px]">
        <div className="flex w-[275px] flex-col items-center pt-[9px] text-[#e13131]">
          <svg className="h-[7px] w-5" viewBox="0 0 20 7">
            <path d="M10 0l10 7H0z" fill="#777" />
          </svg>
          <Fit className="mt-[14px] w-[137px] text-[40px]">3349.14</Fit>
          <div className="mt-[10px] flex w-full items-center pl-[41px]">
            <Fit className="w-[71px] text-[36px] text-[#666]">创业</Fit>
            <Fit className="ml-[50px] w-[104px] text-[39px]">0.82%</Fit>
          </div>
        </div>
        <NavItem
          label="交易"
          icon={
            <>
              <path d="M20 7a27 27 0 0137 41M50 54A27 27 0 0111 17" />
              <path d="M2 19l9-3v9M66 38l-9 8v-9" />
              <path d="M24 17l10 13 10-13M34 30v16M24 29h20M24 38h20" />
            </>
          }
        />
        <NavItem
          label="发帖"
          icon={
            <>
              <path d="M46 3H14a6 6 0 00-6 6v43a6 6 0 006 6h40a6 6 0 006-6V20" />
              <path d="M27 37l4-9L51 8l5 4-21 20zM54 5l3-3 4 3-3 4z" fill="#666" stroke="none" />
            </>
          }
        />
        <NavItem
          label="功能"
          icon={
            <>
              <rect x="8" y="5" width="22" height="22" rx="3" />
              <rect x="8" y="33" width="22" height="22" rx="3" />
              <rect x="36" y="33" width="22" height="22" rx="3" />
              <path d="M47 3.500L59.500 16 47 28.500 34.500 16z" strokeLinejoin="round" />
            </>
          }
        />
        <NavItem
          label="设自选"
          icon={
            <>
              <circle cx="34" cy="30" r="27" />
              <g fill="#666" stroke="none">
                <circle cx="22" cy="30" r="3" />
                <circle cx="34" cy="30" r="3" />
                <circle cx="46" cy="30" r="3" />
              </g>
            </>
          }
        />
      </div>
      <div className="mx-auto mt-[2px] h-[7px] w-[432px] rounded-full bg-[#bbbcbf]" />
    </div>
  );
}

export default function App() {
  return (
    <div className="h-[2400px] w-[1080px] overflow-hidden bg-white font-['Inter','Noto_Sans_CJK_SC',sans-serif]">
      <StatusBar />
      <Header />
      <Quote />
      <News />
      <Tabs />
      <InfoLine />
      <div className="flex h-[1322px]">
        <div className="w-[735px] border-r-2 border-[#dcdcdc]">
          <PriceChart />
          <VolumeChart />
          <NetChart />
          <TimeAxis />
        </div>
        <OrderBook />
      </div>
      <Level2 />
      <BottomNav />
    </div>
  );
}
